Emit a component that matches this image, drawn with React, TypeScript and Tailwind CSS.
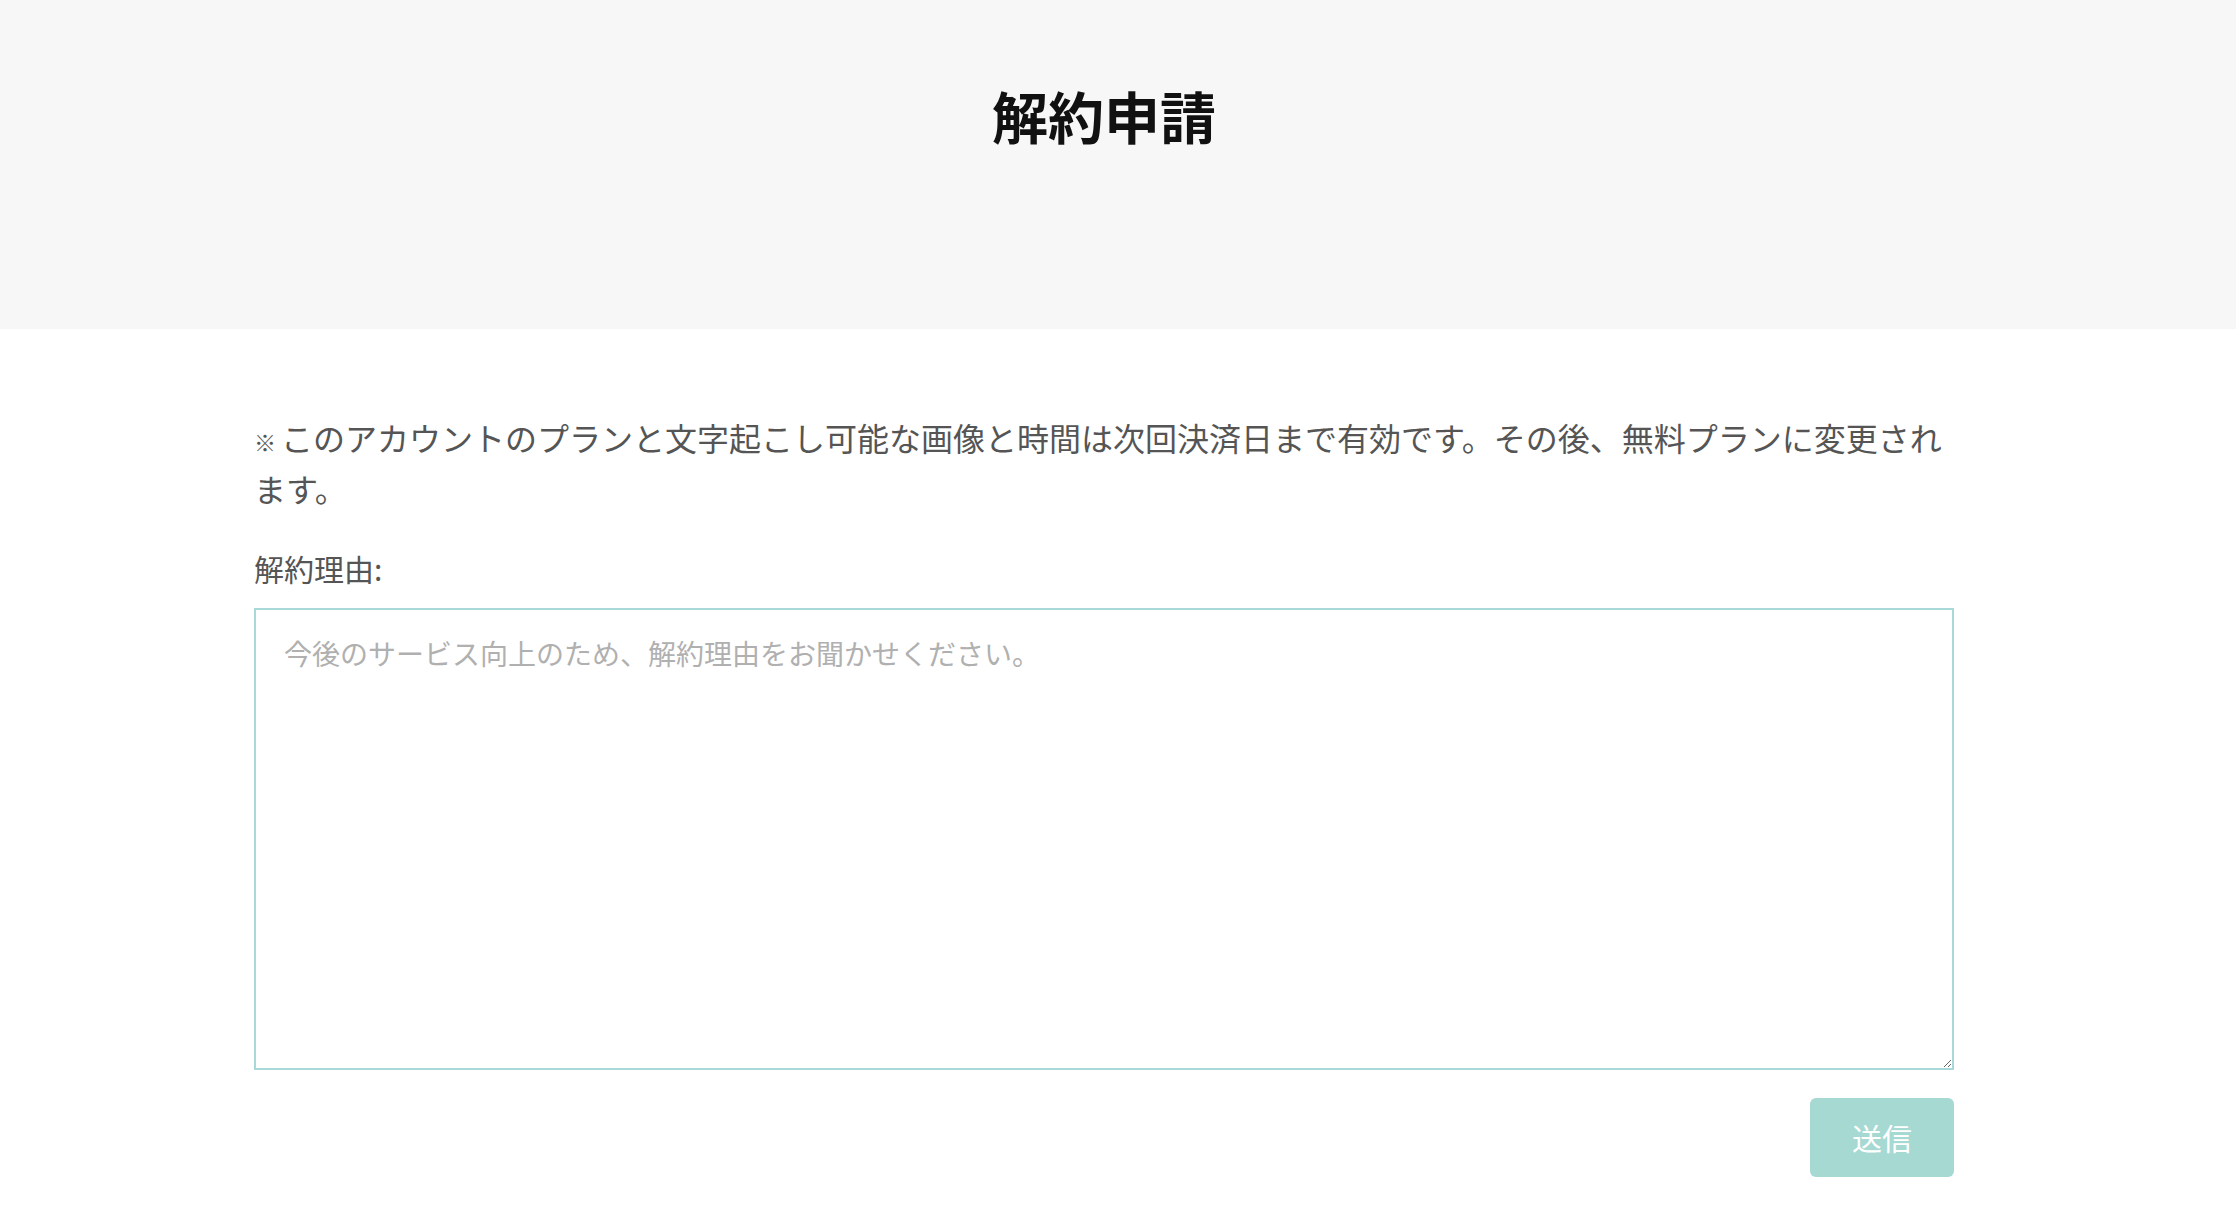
import React from "react";

export default function App() {
  const font = { fontFamily: '"Noto Sans CJK JP", "Noto Sans", sans-serif' };
  return (
    <div className="min-h-[1224px] bg-white" style={font}>
      <header className="h-[329px] bg-[#f7f7f7] pr-[28px] pt-[80px]">
        <h1 className="text-center text-[56px] font-bold leading-[70px] text-[#111]">解約申請</h1>
      </header>
      <main className="mx-auto w-[2208px] pr-[28px]">
        <div className="mx-auto w-[1700px] pt-[83px]">
          <p className="text-[32px] leading-[51px] text-[#555]">
            <span className="mr-[5px] inline-block text-[22px] leading-none">※</span>このアカウントのプランと文字起こし可能な画像と時間は次回決済日まで有効です。その後、無料プランに変更されます。
          </p>
          <label className="mt-[32px] block text-[30px] leading-[44px] text-[#555]">解約理由:</label>
          <textarea
            className="mt-[18px] block h-[462px] w-full resize-y border-2 border-[#aad8d8] px-[28px] py-[22px] text-[28px] leading-[42px] text-[#333] outline-none placeholder:text-[#b0b0b0]"
            placeholder="今後のサービス向上のため、解約理由をお聞かせください。"
          />
          <div className="mt-[28px] flex justify-end">
            <button className="h-[79px] w-[144px] rounded-[6px] bg-[#a6d9d2] text-[30px] text-white">送信</button>
          </div>
        </div>
      </main>
    </div>
  );
}
